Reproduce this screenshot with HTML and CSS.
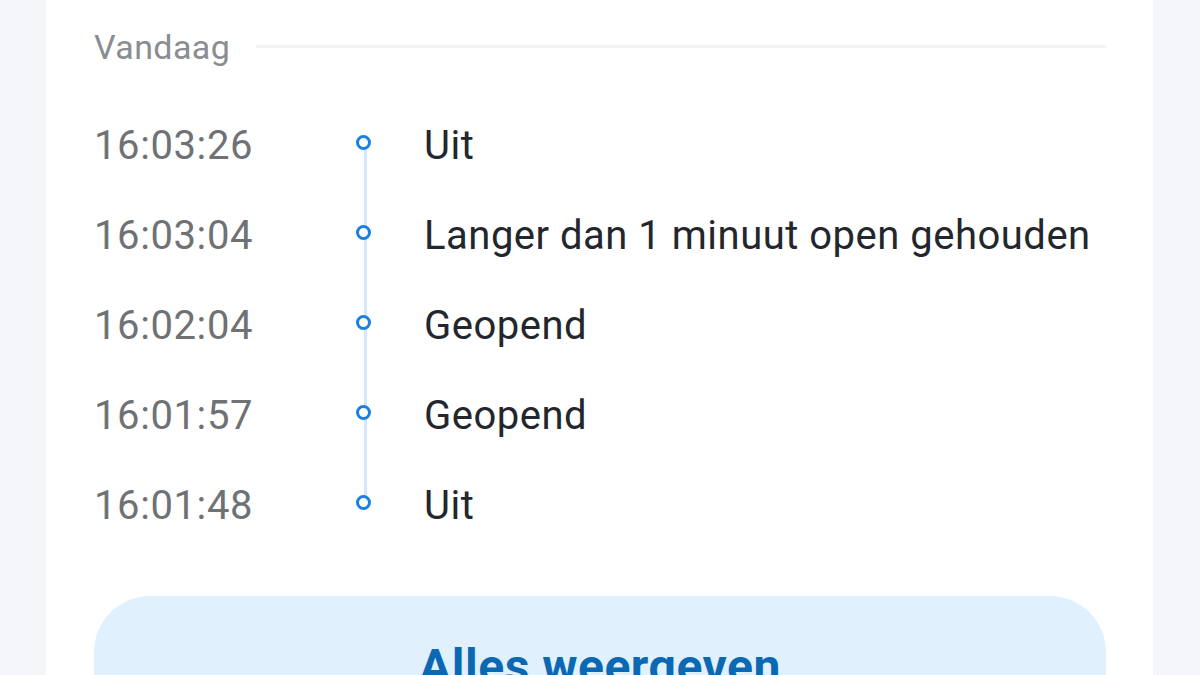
FILE: index.html
```html
<!DOCTYPE html>
<html>
<head>
    <link rel="stylesheet" href="styles.css">
</head>
<body>
    <div class="page">
        <div class="card">
            <div class="day-header">
                <span class="day-label">Vandaag</span>
                <span class="day-rule"></span>
            </div>

            <ul class="timeline">
                <li class="event">
                    <span class="event-time">16:03:26</span>
                    <span class="event-dot"></span>
                    <span class="event-text">Uit</span>
                </li>
                <li class="event">
                    <span class="event-time">16:03:04</span>
                    <span class="event-dot"></span>
                    <span class="event-text">Langer dan 1 minuut open gehouden</span>
                </li>
                <li class="event">
                    <span class="event-time">16:02:04</span>
                    <span class="event-dot"></span>
                    <span class="event-text">Geopend</span>
                </li>
                <li class="event">
                    <span class="event-time">16:01:57</span>
                    <span class="event-dot"></span>
                    <span class="event-text">Geopend</span>
                </li>
                <li class="event">
                    <span class="event-time">16:01:48</span>
                    <span class="event-dot"></span>
                    <span class="event-text">Uit</span>
                </li>
            </ul>

            <button type="button" class="show-all">Alles weergeven</button>
        </div>
    </div>
</body>
</html>
```

FILE: styles.css
```css
html, body {
    margin: 0;
    height: 100%;
    overflow: hidden;
}

body {
    font-family: Roboto, "Noto Sans", sans-serif;
    background-color: #f5f6fa;
}

.page {
    padding: 0 47px 0 46px;
    height: 100%;
}

.card {
    background: #fff;
    height: 100%;
    padding: 24px 47px 0 48px;
    box-sizing: border-box;
}

.day-header {
    display: flex;
    align-items: center;
    gap: 26px;
    height: 46px;
}

.day-label {
    font-size: 34px;
    letter-spacing: 0.4px;
    color: #8a8d91;
    line-height: 46px;
}

.day-rule {
    flex: 1;
    height: 3px;
    margin-top: -2px;
    background: #f2f3f5;
}

.timeline {
    list-style: none;
    margin: 30px 0 0;
    padding: 0;
}

.event {
    display: flex;
    align-items: center;
    height: 90px;
    position: relative;
}

.event-time {
    width: 262px;
    font-size: 40px;
    letter-spacing: 0.6px;
    color: #6f7275;
}

.event-dot {
    position: relative;
    width: 9px;
    height: 9px;
    border: 3.5px solid #1c80e2;
    border-radius: 50%;
    margin-top: -5px;
    z-index: 1;
    background: #fff;
}

/* connector between the dots */
.event:not(:last-child)::after {
    content: "";
    position: absolute;
    left: 270px;
    top: 50px;
    height: 90px;
    width: 3px;
    background: #d5e8fb;
}

.event-text {
    margin-left: 53px;
    font-size: 40px;
    letter-spacing: 0.5px;
    color: #23272d;
}

.show-all {
    display: block;
    width: 100%;
    height: 140px;
    margin-top: 46px;
    border: none;
    border-radius: 56px;
    background: #e1f0fd;
    color: #0b69b4;
    font-family: Roboto, "Noto Sans", sans-serif;
    font-size: 48px;
    font-weight: 700;
    letter-spacing: 0.5px;
    padding: 0;
}
```
